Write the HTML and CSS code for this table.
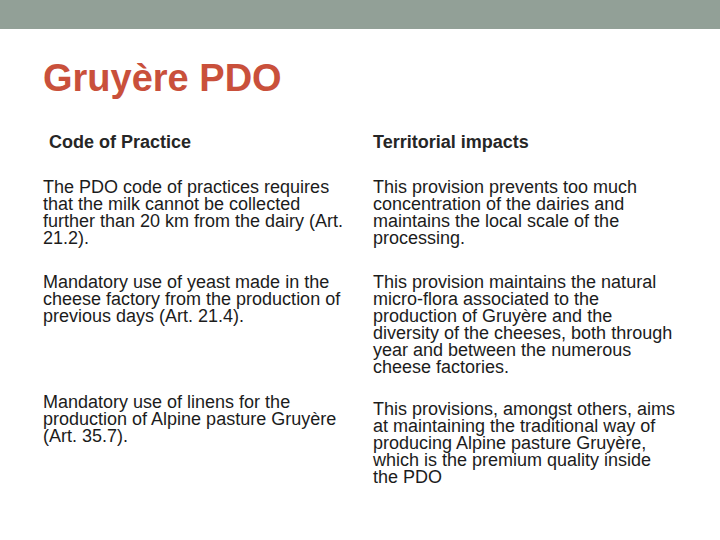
FILE: index.html
```html
<!DOCTYPE html>
<html>
<head>
<meta charset="utf-8">
<link rel="stylesheet" href="styles.css">
</head>
<body>
<div class="topbar"></div>
<div class="slide">
  <h1 class="title">Gruyère PDO</h1>
  <div class="table">
    <div class="row head">
      <div class="cell first">Code of Practice</div>
      <div class="cell">Territorial impacts</div>
    </div>
    <div class="row r1">
      <div class="cell">The PDO code of practices requires that the milk cannot be collected further than 20 km from the dairy (Art. 21.2).</div>
      <div class="cell">This provision prevents too much concentration of the dairies and maintains the local scale of the processing.</div>
    </div>
    <div class="row r2">
      <div class="cell">Mandatory use of yeast made in the cheese factory from the production of previous days (Art. 21.4).</div>
      <div class="cell">This provision maintains the natural micro-flora associated to the production of Gruyère and the diversity of the cheeses, both through year and between the numerous cheese factories.</div>
    </div>
    <div class="row r3">
      <div class="cell">Mandatory use of linens for the production of Alpine pasture Gruyère (Art. 35.7).</div>
      <div class="cell shifted">This provisions, amongst others, aims at maintaining the traditional way of producing Alpine pasture Gruyère, which is the premium quality inside the PDO</div>
    </div>
  </div>
</div>
</body>
</html>
```

FILE: styles.css
```css
html, body {
  margin: 0;
  padding: 0;
  background: #ffffff;
}
body {
  width: 720px;
  height: 540px;
  overflow: hidden;
  font-family: "Liberation Sans", Arial, sans-serif;
  color: #1c1c1c;
}
.topbar {
  height: 29px;
  background: #92a097;
}
.slide {
  padding-left: 43px;
}
.title {
  margin: 27px 0 0 0;
  font-size: 38px;
  line-height: 44px;
  font-weight: bold;
  color: #c9503b;
}
.table {
  margin-top: 34px;
}
.row {
  display: grid;
  grid-template-columns: 306px 304px;
  column-gap: 24px;
  font-size: 18px;
  line-height: 17px;
}
.head .cell {
  font-weight: bold;
  color: #262626;
}
.head .first {
  padding-left: 6px;
}
.r1 {
  padding-top: 28px;
}
.r2 {
  padding-top: 27px;
}
.r3 {
  padding-top: 18px;
}
.r3 .shifted {
  padding-top: 7px;
}
```
